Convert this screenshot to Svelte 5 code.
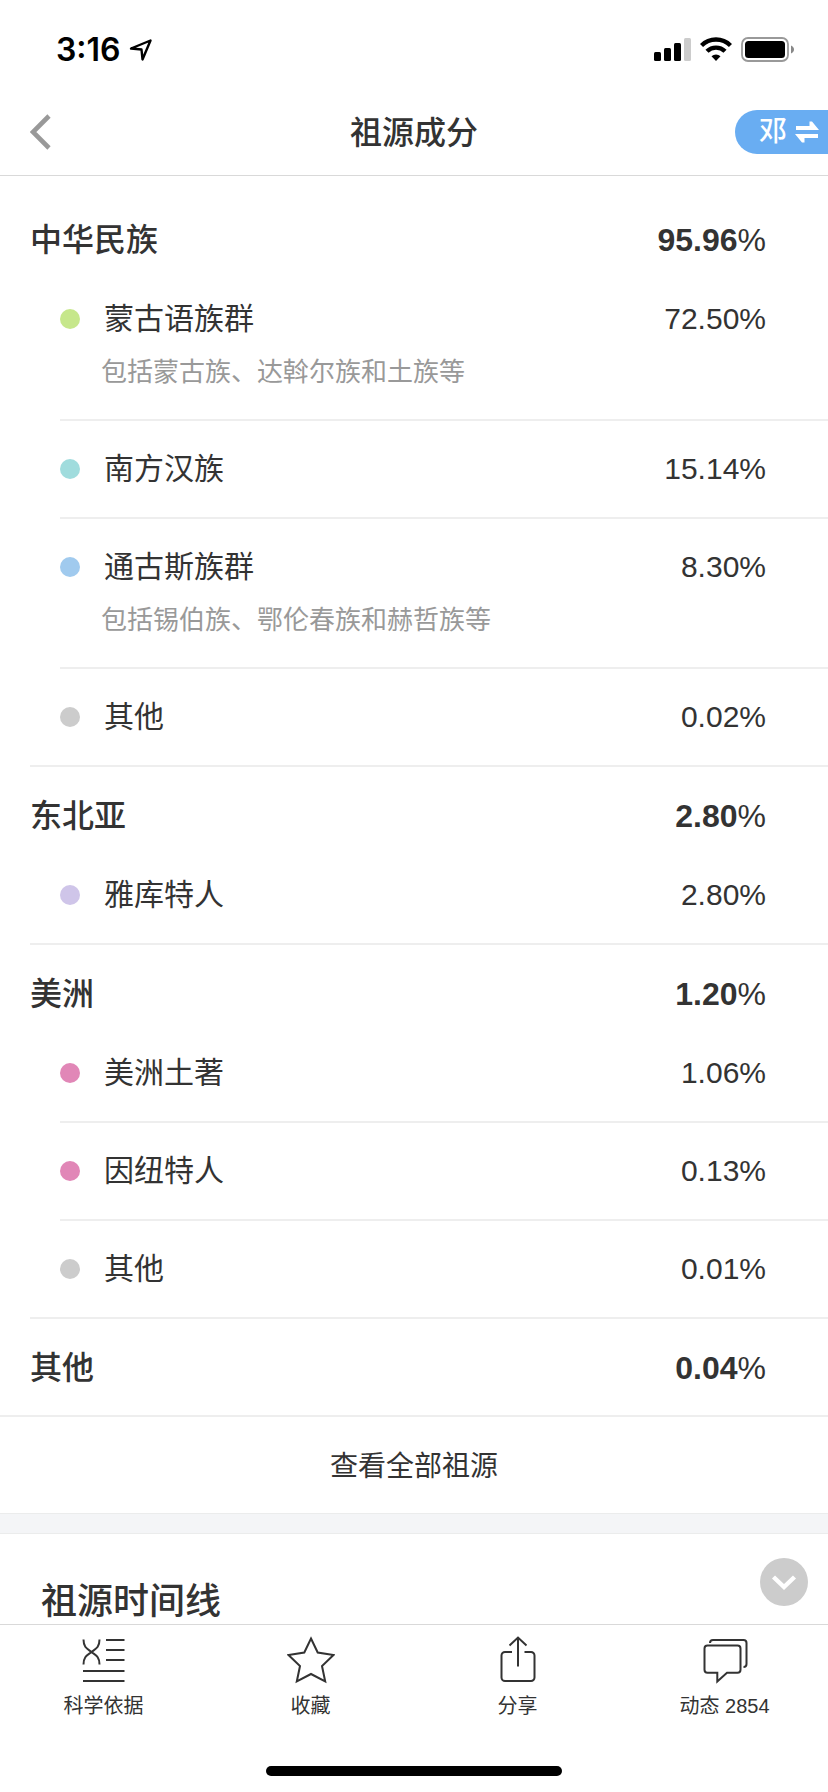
<script>
  const groups = [
    {
      name: "中华民族",
      value: "95.96",
      items: [
        {
          name: "蒙古语族群",
          value: "72.50%",
          color: "#c6e78b",
          desc: "包括蒙古族、达斡尔族和土族等",
        },
        { name: "南方汉族", value: "15.14%", color: "#a0dcdd" },
        {
          name: "通古斯族群",
          value: "8.30%",
          color: "#a0caee",
          desc: "包括锡伯族、鄂伦春族和赫哲族等",
        },
        { name: "其他", value: "0.02%", color: "#cccccc" },
      ],
    },
    {
      name: "东北亚",
      value: "2.80",
      items: [{ name: "雅库特人", value: "2.80%", color: "#cfc5e9" }],
    },
    {
      name: "美洲",
      value: "1.20",
      items: [
        { name: "美洲土著", value: "1.06%", color: "#e187b7" },
        { name: "因纽特人", value: "0.13%", color: "#e187b7" },
        { name: "其他", value: "0.01%", color: "#cccccc" },
      ],
    },
    { name: "其他", value: "0.04", items: [] },
  ];
</script>

<div class="app">
  <div class="status">
    <div class="status-side">
      <span class="time">3:16</span>
      <svg width="24" height="24" viewBox="0 0 24 24">
        <path
          d="M2 10.5L21.5 2.5L13.5 21.5L12.5 11.5Z"
          fill="none"
          stroke="#000"
          stroke-width="2.4"
          stroke-linejoin="round"
        />
      </svg>
    </div>
    <div class="status-side">
      <svg width="38" height="26" viewBox="0 0 38 26">
        <rect x="0" y="15" width="7" height="9" rx="1.5" />
        <rect x="10" y="11" width="7" height="13" rx="1.5" />
        <rect x="20" y="6" width="7" height="18" rx="1.5" />
        <rect x="30" y="1" width="7" height="23" rx="1.5" fill="#ccc" />
      </svg>
      <svg width="32" height="26" viewBox="0 0 32 26">
        <g fill="none" stroke="#000" stroke-width="4.4">
          <path d="M1.5 8.5a20.5 20.5 0 0 1 29 0" />
          <path d="M7 14.3a12.8 12.8 0 0 1 18 0" />
        </g>
        <path d="M11.5 19.3a6.5 6.5 0 0 1 9 0L16 24Z" />
      </svg>
      <svg width="54" height="26" viewBox="0 0 54 26">
        <rect
          x="2"
          y="1"
          width="46"
          height="23"
          rx="6"
          fill="none"
          stroke="#999"
          stroke-width="1.8"
        />
        <rect x="5" y="4" width="40" height="17" rx="3.5" />
        <path d="M51 8.5c4 1.4 4 6.6 0 8z" fill="#888" />
      </svg>
    </div>
  </div>

  <header class="nav">
    <button class="back" aria-label="返回">
      <svg width="22" height="36" viewBox="0 0 22 36">
        <path
          d="M19 2L3 18L19 34"
          fill="none"
          stroke="#999"
          stroke-width="4.6"
        />
      </svg>
    </button>
    <h1>祖源成分</h1>
    <button class="switch">
      邓
      <svg width="24" height="22" viewBox="0 0 24 22">
        <path
          d="M1 5H14.500V0.500H17L24 9H1ZM23 13V17H9.500V21.500H7L0 13Z"
          fill="#fff"
        />
      </svg>
    </button>
  </header>

  <main>
    <div class="groups">
      {#each groups as group}
        <section class="group">
          <div class="group-head" class:single={!group.items.length}>
            <h2>{group.name}</h2>
            <strong>{group.value}<span>%</span></strong>
          </div>
          {#if group.items.length}
            <ul>
              {#each group.items as item}
                <li>
                  <div class="row">
                    <i class="dot" style="background: {item.color}"></i>
                    <span class="name">{item.name}</span>
                    <span>{item.value}</span>
                  </div>
                  {#if item.desc}
                    <p>{item.desc}</p>
                  {/if}
                </li>
              {/each}
            </ul>
          {/if}
        </section>
      {/each}
    </div>
    <button class="all">查看全部祖源</button>
    <div class="gap"></div>
    <section class="timeline">
      <h2>祖源时间线</h2>
      <button class="collapse" aria-label="展开">
        <svg width="48" height="48" viewBox="0 0 48 48">
          <path
            d="M13.500 19L24 29L34.500 19"
            fill="none"
            stroke="#fff"
            stroke-width="4.4"
          />
        </svg>
      </button>
    </section>
  </main>

  <footer>
    <nav class="tabs">
      <button>
        <svg class="icon" viewBox="0 0 48 48">
          <path
            d="M3.500 3.500C3.500 12 8 13 11.500 16S19.500 20 19.500 28.500M19.500 3.500C19.500 12 15 13 11.500 16S3.500 20 3.500 28.500M26 4H44.500M26 14H44.500M26 24H44.500M3 35H44.500M3 45H44.500"
          />
        </svg>
        科学依据
      </button>
      <button>
        <svg class="icon" viewBox="0 0 48 48">
          <path
            d="M24 2.500L30.700 16.500L46.500 19L35 30L38.200 45.500L24 38L9.800 45.500L13 30L1.500 19L17.300 16.500Z"
          />
        </svg>
        收藏
      </button>
      <button>
        <svg class="icon" viewBox="0 0 48 48">
          <path
            d="M18 16H11a3.500 3.500 0 0 0-3.500 3.500V41.500a3.500 3.500 0 0 0 3.500 3.500H37a3.500 3.500 0 0 0 3.500-3.500V19.500a3.500 3.500 0 0 0-3.500-3.500H30.500M24 30.500V1.500M15.500 9.500L24 1.500L32.500 9.500"
          />
        </svg>
        分享
      </button>
      <button>
        <svg class="icon" viewBox="0 0 48 48">
          <path
            d="M6.500 9.500H36.500a3 3 0 0 1 3 3V33.800a3 3 0 0 1-3 3H26L16.300 45.500V36.800H6.500a3 3 0 0 1-3-3V12.500a3 3 0 0 1 3-3ZM9 7C9 5 10 4 12 4H42.500a3 3 0 0 1 3 3V28C45.500 30 44.500 31 42.500 31"
          />
        </svg>
        动态 2854
      </button>
    </nav>
    <div class="home-bar"></div>
  </footer>
</div>

<style>
  :global(body) {
    margin: 0;
  }
  .app {
    display: flex;
    flex-direction: column;
    height: 100vh;
    background: #fff;
    color: #333;
    font-family: "Liberation Sans", "Noto Sans CJK SC", sans-serif;
    font-size: 30px;
    line-height: 40px;
  }
  h1,
  h2,
  p,
  ul {
    margin: 0;
    padding: 0;
  }
  h1,
  h2 {
    font-size: 32px;
    font-weight: 500;
  }
  h1 {
    padding-top: 2px;
  }
  button {
    border: 0;
    padding: 0;
    background: none;
    color: inherit;
    font: inherit;
    cursor: pointer;
  }
  svg {
    display: block;
  }
  .status {
    display: flex;
    align-items: center;
    justify-content: space-between;
    height: 88px;
    padding: 12px 34px 0 56px;
    box-sizing: border-box;
  }
  .status-side {
    display: flex;
    align-items: center;
    gap: 8px;
  }
  .time {
    color: #000;
    font-family: Inter, sans-serif;
    font-size: 32px;
    font-weight: 600;
  }
  .nav {
    display: grid;
    grid-template-columns: 1fr auto 1fr;
    align-items: center;
    height: 87px;
    border-bottom: 1px solid #d9d9d9;
  }
  .back {
    justify-self: start;
    padding: 8px 30px;
  }
  .switch {
    display: flex;
    align-items: center;
    justify-self: end;
    gap: 8px;
    height: 44px;
    padding: 0 9px 0 24px;
    border-radius: 22px 0 0 22px;
    background: #69adf2;
    color: #fff;
    font-size: 28px;
    font-weight: 500;
  }
  main {
    flex: 1;
    min-height: 0;
    overflow-y: auto;
    scrollbar-width: none;
  }
  .groups {
    padding-top: 15px;
  }
  .group {
    margin-left: 30px;
    border-bottom: 2px solid #eee;
  }
  .group:last-child {
    margin-left: 0;
    padding-left: 30px;
  }
  .group-head {
    display: flex;
    justify-content: space-between;
    padding: 29px 62px 11px 0;
  }
  .group-head.single {
    padding-bottom: 27px;
  }
  .group-head strong {
    font-size: 32px;
  }
  .group-head strong span {
    font-weight: 400;
  }
  ul {
    margin-left: 30px;
    list-style: none;
  }
  li {
    padding: 28px 62px 28px 0;
    border-bottom: 2px solid #eee;
  }
  li:last-child {
    border-bottom: 0;
  }
  .row {
    display: flex;
    align-items: center;
  }
  .dot {
    width: 20px;
    height: 20px;
    margin-right: 24px;
    border-radius: 50%;
  }
  .name {
    flex: 1;
  }
  li p {
    margin: 14px 0 0 41px;
    color: #999;
    font-size: 26px;
    line-height: 38px;
  }
  .all {
    display: block;
    width: 100%;
    padding: 30px 0 26px;
    font-size: 28px;
  }
  .gap {
    height: 19px;
    border: solid #ebecec;
    border-width: 1px 0;
    background: #f4f5f7;
  }
  .timeline {
    display: flex;
    align-items: flex-start;
    justify-content: space-between;
    padding: 24px 20px 40px 41px;
  }
  .timeline h2 {
    padding-top: 24px;
    font-size: 36px;
  }
  .collapse {
    border-radius: 50%;
    background: #ccc;
  }
  footer {
    border-top: 1px solid #d9d9d9;
  }
  .tabs {
    display: grid;
    grid-template-columns: repeat(4, 1fr);
  }
  .tabs button {
    display: flex;
    flex-direction: column;
    align-items: center;
    gap: 8px;
    padding-top: 11px;
    font-size: 20px;
    line-height: 28px;
  }
  .icon {
    width: 48px;
    height: 48px;
    fill: none;
    stroke: #333;
    stroke-width: 2;
  }
  .home-bar {
    width: 296px;
    height: 10px;
    margin: 46px auto 16px;
    border-radius: 5px;
    background: #000;
  }
</style>
